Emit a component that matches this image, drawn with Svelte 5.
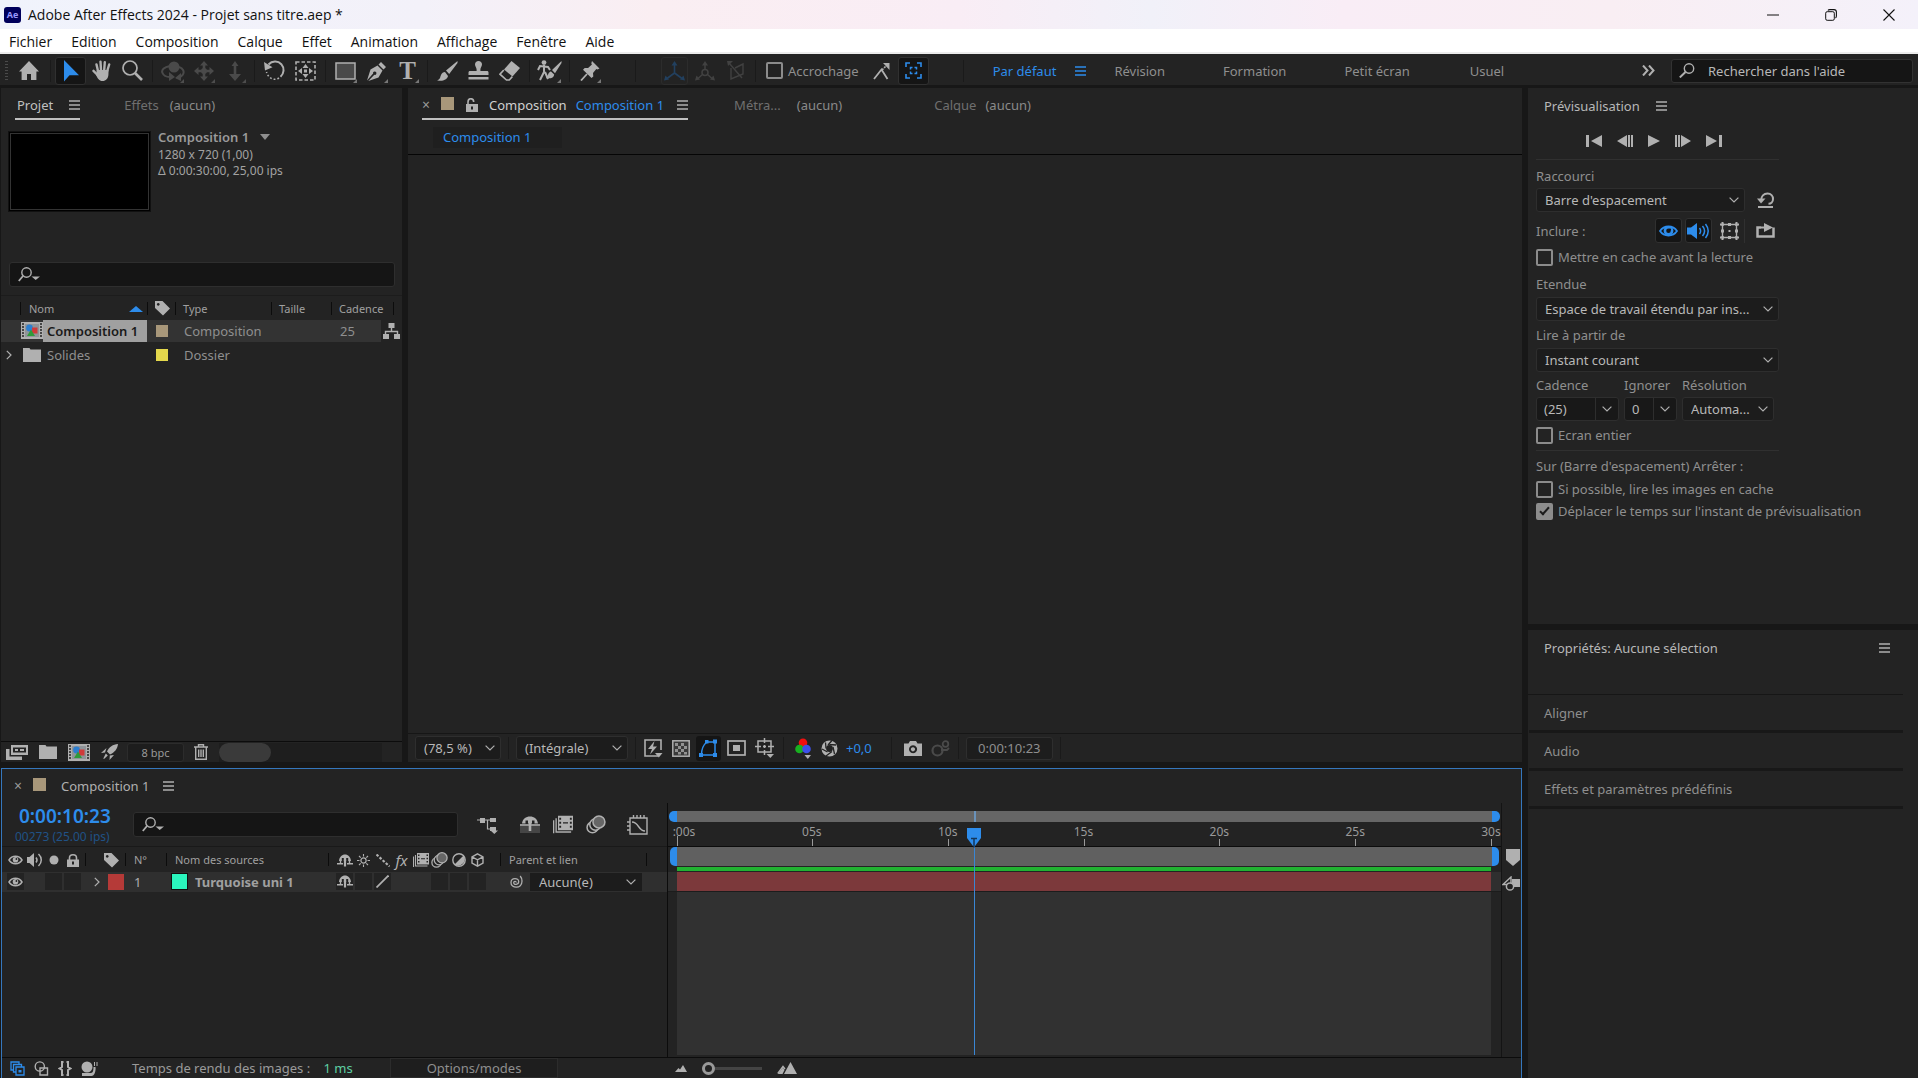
<script lang="ts">
  type Icon = { w: number; h: number; d: string };

  const line = (d: string, width = 1.5) =>
    `<path d="${d}" fill="none" stroke="currentColor" stroke-width="${width}"/>`;
  const fill = (d: string) => `<path d="${d}" fill="currentColor"/>`;

  const shapes =
    '<circle cx="8.5" cy="6" r="3.4" fill="#2d7fd0"/><rect x="11" y="5.500" width="5.500" height="6" fill="#d03a3a"/><path d="M6 14l4-6.500L14 14z" fill="#2f9a3a"/>';
  const film =
    '<rect width="22" height="17" fill="#b0b0b0"/><rect x="4" y="2" width="14" height="13" fill="#8f9499"/><path d="M1 2h2M1 5h2M1 8h2M1 11h2M1 14h2M19 2h2M19 5h2M19 8h2M19 11h2M19 14h2" stroke="#232323" stroke-width="1.6"/>';

  const icons: Record<string, Icon> = {
    home: { w: 20, h: 19, d: fill('M10 0l10 10.5h-2.6V19H12v-6H8v6H2.600V10.500H0z') },
    select: { w: 16, h: 22, d: fill('M1 0v21.500l5.500-6.300H16z') },
    hand: {
      w: 20,
      h: 21,
      d:
        '<g stroke="currentColor" stroke-width="2.400" stroke-linecap="round" fill="none"><path d="M6 11L4.500 4.500M9 10L8.500 1.600M12.200 10l.6-7.800M15.200 11l2-6.500M5.500 15L1.500 10.800"/></g>' +
        fill('M4.800 10h11.800l-.2 5c-.4 3.500-2.400 6-5.800 6-3.600 0-4.800-2.400-6.600-6z')
    },
    zoom: {
      w: 21,
      h: 21,
      d: '<circle cx="8" cy="8" r="7" fill="none" stroke="currentColor" stroke-width="1.700"/>' + line('M13 13l7 7', 2.6)
    },
    orbit: {
      w: 24,
      h: 20,
      d:
        '<circle cx="13" cy="6" r="5.500" fill="currentColor"/>' +
        line('M9 5C3 6 0 9 1.500 12c1 2.500 4 4 7.500 4M18 6c4 1 6 5 3.500 8-1.500 2-4 3-6 3', 2) +
        fill('M8 11v9l6-4zM20 20v-8l-6 5z')
    },
    pan: {
      w: 20,
      h: 20,
      d:
        line('M10 3v14M3 10h14', 2.6) +
        fill('M10 0l4 4.500H6zM10 20l4-4.500H6zM0 10l4.500-4v8zM20 10l-4.500-4v8z') +
        '<circle cx="10" cy="10" r="3" fill="currentColor"/>'
    },
    dolly: { w: 14, h: 20, d: line('M7 3v14', 2.6) + fill('M7 0l3.500 5h-7zM7 20l6-7H1z') },
    rotate: {
      w: 21,
      h: 21,
      d:
        line('M4.500 4.500C8 .8 14 .6 17.300 4.200c3.400 4 2.800 9.300-.8 12.500', 2) +
        fill('M0 2l1 8.500 7.500-3.300z') +
        '<path d="M15 18c-4.500 2.800-10.500 1-12.500-6" fill="none" stroke="currentColor" stroke-width="1.600" stroke-dasharray="1.800 2"/>'
    },
    anchor: {
      w: 21,
      h: 20,
      d:
        '<rect x="1" y="1" width="19" height="18" fill="none" stroke="currentColor" stroke-width="1.600" stroke-dasharray="3.500 2"/>' +
        fill('M10.500 3l3 4h-6zM10.500 17l3-4h-6zM3 10l4-3v6zM18 10l-4-3v6z') +
        '<rect x="9" y="8.500" width="3" height="3" fill="currentColor"/>'
    },
    rect: {
      w: 21,
      h: 18,
      d: '<rect x="1" y="1" width="19" height="16" fill="#4a4a4a" stroke="currentColor" stroke-width="1.500"/>'
    },
    pen: {
      w: 20,
      h: 20,
      d:
        fill('M0 19.500L3.500 8.500l7-4 5 5-4 7L1.300 20l6-6.200a1.700 1.700 0 1 0-1.200-1.200zM11.500 3.500L14 1l5 5-2.500 2.500z')
    },
    brush: {
      w: 21,
      h: 20,
      d: fill('M20.500 0L9 9.500l3.200 3.500L20.500 2zM8 11c-4 .5-4 3.500-5 6-.6 1.300-1.600 1.900-3 2.200 4.500 1.300 10 .2 11-4.200z')
    },
    stamp: {
      w: 21,
      h: 19,
      d: fill('M7 3.500C7 1.500 8.500 0 10.500 0S14 1.500 14 3.500c0 2-1.600 3-1.600 5V10H19c1 0 1.500.7 1.500 1.600V14H.5v-2.400C.5 10.700 1 10 2 10h6.600V8.500c0-2-1.600-3-1.600-5zM.5 16h20v2.400H.5z')
    },
    eraser: {
      w: 21,
      h: 20,
      d: fill('M12.500 0L21 7l-7.500 8.500-8.500-7z') + line('M4.800 9L1 13.200 7.500 19h2.800l3-3.400', 1.6)
    },
    roto: {
      w: 25,
      h: 21,
      d:
        '<circle cx="7" cy="2.600" r="2.400" fill="currentColor"/>' +
        line('M7 5v7l-4 8M8 12l3 7M1 10l2-4 8 1 2 3', 2) +
        fill('M24.500 1L15 10l3 3.200L24.500 3zM14 11.500c-3 .5-2.500 4-5 6.500 4 1 8 0 8.200-3.500z')
    },
    pin: {
      w: 20,
      h: 20,
      d: fill('M12 0l7.500 7.500-2 1-1.200-.4-3.300 4 .3 3.400-1.800 1.600L3 8.700l1.700-1.800 3.400.2 3.800-3.500-.6-1.300z') + line('M7 13l-6 6.500', 1.8)
    },
    axis: {
      w: 21,
      h: 20,
      d: line('M10.500 3v9L3 17.500M10.500 12l7.500 5.500', 1.6) + fill('M10.500 0l3 4.500h-6zM0 19.500l1.500-5 3.500 4zM21 19.500l-1.500-5-3.500 4z')
    },
    worldAxis: {
      w: 20,
      h: 20,
      d:
        line('M10 3v6M8 13l-5 4.500M12 13l5 4.500', 1.5) +
        '<circle cx="10" cy="11.500" r="3" fill="none" stroke="currentColor" stroke-width="1.500"/>' +
        fill('M10 0l3 4.500H7zM0 19.500l1.500-5 3.500 4zM20 19.500l-1.500-5-3.500 4z')
    },
    viewAxis: { w: 18, h: 20, d: line('M4 7v11l12-5V3L8 7M2 2l13 15', 1.4) + fill('M0 0h6L1 5z') },
    snap: {
      w: 17,
      h: 18,
      d:
        line('M1 17l7.500-9.500 6 9.500', 1.8) +
        '<path d="M9 8l4-4" stroke="currentColor" stroke-width="1.600" stroke-dasharray="2 1"/>' +
        fill('M10 1h6.500v7z')
    },
    bounds: {
      w: 17,
      h: 17,
      d:
        line('M1 5V1h4M12 1h4v4M16 12v4h-4M5 16H1v-4', 1.6) +
        '<path d="M5.500 7.500v-2h2M9.500 5.500h2v2M11.500 9.500v2h-2M7.500 11.500h-2v-2" fill="none" stroke="currentColor" stroke-width="1.500"/>'
    },
    menu: { w: 11, h: 10, d: line('M0 1h11M0 5h11M0 9h11', 1.4) },
    more: { w: 13, h: 11, d: line('M1 .5l4.500 5L1 10.500M7 .5l4.500 5L7 10.500', 2) },
    search: {
      w: 16,
      h: 15,
      d: '<circle cx="10" cy="5.500" r="4.700" fill="none" stroke="currentColor" stroke-width="1.400"/>' + line('M6.500 9L.8 14.400', 2)
    },
    searchMenu: {
      w: 22,
      h: 15,
      d:
        '<circle cx="8.500" cy="5.500" r="4.700" fill="none" stroke="currentColor" stroke-width="1.400"/>' +
        line('M5 9L.8 14', 1.8) +
        fill('M13.500 9.500H22L17.700 13z')
    },
    lock: {
      w: 12,
      h: 14,
      d:
        line('M2 6.500V4c0-2 1-3.300 2.800-3.300S7.700 2 7.700 4', 1.6) +
        '<path d="M0 6h12v8H0zM5 8.500h2v3H5z" fill="currentColor" fill-rule="evenodd"/>'
    },
    padlock: {
      w: 12,
      h: 13,
      d:
        line('M2.500 6V4c0-2 1.400-3.200 3.500-3.200S9.500 2 9.500 4v2', 1.6) +
        '<path d="M0 5.500h12V13H0zM5 7.500h2v3H5z" fill="currentColor" fill-rule="evenodd"/>'
    },
    down: { w: 10, h: 6, d: fill('M0 0h10L5 6z') },
    up: { w: 14, h: 6, d: fill('M0 6h14L7 0z') },
    tag: {
      w: 15,
      h: 15,
      d: '<path d="M0 0h7.500L15 7.500 8 14.500 0 7zM3.200 2a1.400 1.400 0 1 0 .1 0z" fill="currentColor" fill-rule="evenodd"/>'
    },
    comp: { w: 22, h: 17, d: film + shapes },
    folder: { w: 18, h: 14, d: fill('M0 0h6.500l1 1.500H18V14H0z') },
    tree: { w: 17, h: 16, d: line('M8.500 4v5M2.500 12V8.500h12V12', 1.4) + fill('M5.500 0h6v5h-6zM0 11h6v5H0zM11 11h6v5h-6z') },
    right: { w: 6, h: 10, d: line('M.8.8L5 5 .8 9.200', 1.2) },
    chevron: { w: 10, h: 6, d: line('M.6.6L5 5 9.400.6', 1.2) },
    interpret: {
      w: 22,
      h: 15,
      d:
        '<path d="M5 0h17v10H5zM7 2.500v5h13v-5z" fill="currentColor" fill-rule="evenodd"/>' +
        line('M9 5h3M14 5h4', 1.8) +
        fill('M0 4h3.500v7.500H16V15H0zM1 13h1M3 13h1')
    },
    rocket: {
      w: 17,
      h: 16,
      d: fill('M17 0c-5 .3-9 3-11 7.500l3 3C13.500 8.500 16.500 5 17 0zM5.500 4L0 9l4-.5zM13 11l-4.500 5 .3-4.500zM4.800 9.500l2 2L3 15l-.7-.6z')
    },
    trash: {
      w: 14,
      h: 16,
      d: line('M0 3h14M4.500 3V.8h5V3M1.700 3v12.200h10.600V3M4.700 5.500v7.500M7 5.500v7.500M9.300 5.500v7.500', 1.4)
    },
    fast: {
      w: 19,
      h: 21,
      d:
        line('M14 18H1V2h16v10', 1.6) +
        fill('M10.500 3L4 11h4l-2 5.500 7-8H9zM11 15h7.500l-3.700 4.500z')
    },
    grid: {
      w: 18,
      h: 17,
      d:
        '<rect x=".8" y=".8" width="16.400" height="15.400" fill="#3a3a3a" stroke="currentColor" stroke-width="1.500"/>' +
        '<path d="M3 3h3v3H3zM9 3h3v3H9zM6 6h3v3H6zM12 6h3v3h-3zM3 9h3v3H3zM9 9h3v3H9zM6 12h3v2.500H6zM12 12h3v2.500h-3z" fill="currentColor" opacity=".75"/>'
    },
    mask: {
      w: 19,
      h: 18,
      d: line('M2.500 16c0-6 1.500-10 5.500-13h8v13z', 1.5) + fill('M0 14h4v4H0zM14 14h4v4h-4zM14 .5h4v4h-4zM6 1h3.500v3.500H6z')
    },
    safe: {
      w: 19,
      h: 16,
      d: '<rect x="1" y="1" width="17" height="14" fill="none" stroke="currentColor" stroke-width="1.700"/><rect x="6" y="5" width="7" height="6" fill="currentColor"/>'
    },
    ruler: { w: 20, h: 20, d: line('M3 3h13v11H3zM9.500 0v5M9.500 12v5M0 8.500h6M13 8.500h6M9.500 7v3M8 8.500h3', 1.5) + fill('M11.500 16H19l-3.700 4z') },
    rgb: {
      w: 17,
      h: 21,
      d:
        '<circle cx="8" cy="4.800" r="4.300" fill="#f01010"/><circle cx="4.500" cy="11" r="4.300" fill="#18b020"/><circle cx="11.500" cy="11" r="4.300" fill="#3c50e8"/>' +
        fill('M9.500 17H16l-3.200 4z')
    },
    aperture: {
      w: 17,
      h: 17,
      d:
        '<circle cx="8.500" cy="8.500" r="5.700" fill="none" stroke="currentColor" stroke-width="4.600"/>' +
        '<path d="M8.500 4.500L15 5M12 7l1.500 7M11 11.500L5 16M6.500 12L1 9M5 8.500L4.500 2.500M7 5l4-4.500" stroke="#232323" stroke-width="1.300"/>'
    },
    camera: {
      w: 18,
      h: 15,
      d: '<path d="M0 2.500h4.500L6 0h6l1.500 2.500H18V15H0zM9 4.300a4 4 0 1 0 .1 0zM9 6.200a2.100 2.100 0 1 1-.1 0z" fill="currentColor" fill-rule="evenodd"/>'
    },
    showSnap: {
      w: 19,
      h: 17,
      d:
        '<circle cx="6.500" cy="10.500" r="5" fill="none" stroke="currentColor" stroke-width="2.200"/><circle cx="14.500" cy="4" r="2.800" fill="none" stroke="currentColor" stroke-width="1.800"/>' +
        line('M10 10h6l2-2', 1.8)
    },
    first: { w: 16, h: 12, d: fill('M0 0h3v12H0zM16 0v12L5 6z') },
    prev: { w: 16, h: 12, d: fill('M0 6l10-6v12zM11 0h2v12h-2zM14 0h2v12h-2z') },
    play: { w: 12, h: 12, d: fill('M0 0l12 6-12 6z') },
    next: { w: 16, h: 12, d: fill('M16 6L6 0v12zM0 0h2v12H0zM3 0h2v12H3z') },
    last: { w: 16, h: 12, d: fill('M13 0h3v12h-3zM0 0l11 6-11 6z') },
    reset: { w: 17, h: 16, d: line('M4 9C4 4 7 1.500 10.500 1.500S16 4 16 7s-2 4.800-4.500 4.800M1 15h15', 2) + fill('M0 6.500h8.500L4 11.500z') },
    eyeBlue: {
      w: 19,
      h: 14,
      d: line('M1 7C5 1 14 1 18 7c-4 6-13 6-17 0z', 1.8) + '<circle cx="9.500" cy="6.800" r="3.600" fill="none" stroke="currentColor" stroke-width="2.600"/><circle cx="11" cy="5.500" r="1" fill="#111"/>'
    },
    audioBlue: { w: 23, h: 16, d: fill('M0 4.500h4L10 0v16l-6-4.500H0z') + line('M12.500 5c1.500 2 1.500 4 0 6M15.500 3c2.500 3 2.500 7 0 10M18.500 1c3.500 4.500 3.500 9.500 0 14', 1.5) },
    overlay: {
      w: 19,
      h: 18,
      d: line('M2.500 2.500h14v13h-14z', 1.4) + fill('M0 1.500h4v2H0zM15 1.500h4v2h-4zM0 14.500h4v2H0zM15 14.500h4v2h-4zM1.500 0h2v4h-2zM15.500 0h2v4h-2zM1.500 14h2v4h-2zM15.500 14h2v4h-2zM8 1h3v3H8zM8 14h3v3H8zM1 7.500h3v3H1zM15 7.500h3v3h-3zM8.500 8h2v2h-2z')
    },
    exporter: { w: 19, h: 15, d: line('M5 4.500H1.500v9h16v-9', 2.5) + line('M5 4.500h5', 2) + fill('M8 0l9 4.500L8 9z') },
    eye: {
      w: 15,
      h: 10,
      d: line('M1 5c3-5 10-5 13 0-3 5-10 5-13 0z', 1.5) + '<circle cx="7.500" cy="4.800" r="2.800" fill="currentColor"/><circle cx="8.400" cy="4" r=".9" fill="#232323"/>'
    },
    audio: { w: 16, h: 14, d: fill('M0 4h2.500L7 0v14L2.500 10H0z') + line('M9 4.500c1.300 1.600 1.300 3.400 0 5M11.500 1c3.700 3.500 3.700 8.500 0 12', 1.5) },
    solo: { w: 10, h: 10, d: '<circle cx="5" cy="5" r="4.500" fill="currentColor"/>' },
    shy: {
      w: 16,
      h: 13,
      d:
        '<path d="M2 7C2.300 3 5 .5 8 .5S13.700 3 14 7zM4.800 4h2v3h-2zM9.200 4h2v3h-2z" fill="currentColor" fill-rule="evenodd"/>' +
        line('M0 9.800h6M10 9.800h6M3.500 6.500v3M12.500 6.500v3', 1.4) +
        line('M8 6v6.500', 2.2)
    },
    shyBig: {
      w: 20,
      h: 17,
      d:
        '<path d="M0 10h20v7H0z" fill="#454545"/>' +
        '<path d="M2 7.500C2.500 3 6 .5 10 .5s7.500 2.500 8 7zM5.500 4.500H8v3H5.500zM12 4.500h2.500v3H12z" fill="currentColor" fill-rule="evenodd"/>' +
        line('M0 9h20', 1.6) +
        line('M10 7v8', 2.6)
    },
    sun: {
      w: 13,
      h: 13,
      d: '<circle cx="6.500" cy="6.500" r="2.600" fill="none" stroke="currentColor" stroke-width="1.200"/>' + line('M6.500 0v2.500M6.500 10.500V13M0 6.500h2.500M10.500 6.500H13M2 2l1.700 1.700M9.300 9.300L11 11M11 2L9.300 3.700M3.700 9.300L2 11', 1.1)
    },
    quality: { w: 14, h: 13, d: '<path d="M.5.500l13 12" stroke="currentColor" stroke-width="2.200" stroke-dasharray="2.600 1.600"/>' },
    frames: {
      w: 16,
      h: 14,
      d:
        '<path d="M4 0h12v11.500H4zM5 1.500v1.600h1.500V1.500zM5 4.700v1.600h1.500V4.700zM5 8v1.600h1.500V8zM13.500 1.500v1.600H15V1.500zM13.500 4.700v1.600H15V4.700zM13.500 8v1.600H15V8zM8 5.200h4v1H8z" fill="currentColor" fill-rule="evenodd"/>' +
        line('M2.500 2v11h12M.5 3.500V14', 1.1)
    },
    blur: {
      w: 17,
      h: 16,
      d:
        '<circle cx="5.500" cy="10.500" r="4.600" fill="#232323" stroke="currentColor" stroke-width="1.300"/><circle cx="8" cy="8" r="4.800" fill="#232323" stroke="currentColor" stroke-width="1.300"/><circle cx="11" cy="5.800" r="5.100" fill="#666" stroke="currentColor" stroke-width="1.300"/>'
    },
    adjust: { w: 14, h: 14, d: '<circle cx="7" cy="7" r="6.200" fill="none" stroke="currentColor" stroke-width="1.400"/>' + fill('M11.500 2.500a6.500 6.500 0 0 1-9 9z') },
    cube: { w: 13, h: 14, d: line('M6.500.8l5.500 3v6.400l-5.500 3-5.500-3V3.800zM1 3.800l5.500 3 5.500-3M6.500 6.800v6.400', 1.4) },
    slash: { w: 13, h: 13, d: line('M.5 12.500l12-12', 1.8) },
    whip: { w: 15, h: 14, d: line('M8 7.500c.5-1.500-2.300-1.500-2.300.3 0 2.300 5 2.400 5-1.200 0-4-7.500-4.400-7.700.8C2.700 13.500 14 14.500 14 6c0-2.200-.7-3.700-1.800-5', 1.3) },
    flow: { w: 22, h: 18, d: fill('M3 2h5v5H3zM13 2h6v4h-6zM13 11h6v4h-6zM13.500 14.500H21L17.300 18z') + line('M0 4h14M10.500 4v9h3', 1.2) },
    graph: { w: 21, h: 20, d: line('M3 3h17v16H3zM6.500 0v3M10 0v3M13.500 0v3M17 0v3M0 7h3M0 11h3M0 15h3M5 7c7 0 6 9 13 9', 1.4) },
    shield: { w: 14, h: 17, d: fill('M0 0h14v11l-7 6-7-6z') },
    keyer: { w: 18, h: 15, d: fill('M10 3h8v8h-8z') + line('M1 8.500L9 1v7.500z', 1.4) + '<circle cx="8" cy="10.500" r="3.600" fill="#232323" stroke="currentColor" stroke-width="1.500"/>' },
    layersPane: { w: 15, h: 15, d: line('M4 9H1V1h8v2M6.500 11H3.500V3.500h8v2.500M6 6h8v8H6z', 1.3) + fill('M8.500 9h3v2.500h-3z') },
    switches: { w: 15, h: 15, d: '<circle cx="5.800" cy="5.500" r="4.600" fill="none" stroke="currentColor" stroke-width="1.400"/>' + line('M6 7h7.500v7H6z', 1.4) },
    braces: { w: 14, h: 15, d: line('M5.500 1H4v5L1.500 7.500 4 9v5h1.500M8.500 1H10v5l2.500 1.500L10 9v5H8.500', 2) },
    snail: { w: 17, h: 15, d: '<circle cx="6" cy="6" r="5.500" fill="currentColor"/>' + fill('M1 12h9c2 0 2.500-3 2.500-6h2c.5 4-1 9-4 9H1z') + line('M13.500 5V1M16 5V1', 1) },
    hillSmall: { w: 12, h: 7, d: fill('M0 7l3.500-4L5 4.500 8 0l4 7z') },
    hillBig: { w: 20, h: 12, d: fill('M7 12l6.500-12L20 12z') + line('M.8 11.500L6 4.500l2 2.500', 1.4) + fill('M1 12l5-6.500L7.500 8 5.500 12z') },
    min: { w: 12, h: 12, d: line('M0 6h12', 1) },
    max: { w: 12, h: 12, d: '<rect x=".7" y="2.700" width="8.600" height="8.600" rx="1.500" fill="none" stroke="currentColor"/>' + line('M3 1.500C3.300.8 4 .6 5 .6h4c1.600 0 2.400.8 2.400 2.400v4c0 1-.3 1.700-1 2', 1.1) },
    close: { w: 12, h: 12, d: line('M.5.500l11 11M11.500.500L.5 11.500', 1.1) }
  };

  const menus = ['Fichier', 'Edition', 'Composition', 'Calque', 'Effet', 'Animation', 'Affichage', 'Fenêtre', 'Aide'];

  const toolGroups = [
    [
      { icon: 'select', label: 'Sélection', active: true },
      { icon: 'hand', label: 'Main' },
      { icon: 'zoom', label: 'Zoom' }
    ],
    [
      { icon: 'orbit', label: 'Orbite', dim: true, sub: true },
      { icon: 'pan', label: 'Panoramique', dim: true, sub: true },
      { icon: 'dolly', label: 'Travelling', dim: true, sub: true }
    ],
    [
      { icon: 'rotate', label: 'Rotation' },
      { icon: 'anchor', label: "Point d'ancrage" }
    ],
    [
      { icon: 'rect', label: 'Rectangle', sub: true },
      { icon: 'pen', label: 'Plume', sub: true },
      { icon: '', label: 'Texte', sub: true }
    ],
    [
      { icon: 'brush', label: 'Pinceau' },
      { icon: 'stamp', label: 'Tampon' },
      { icon: 'eraser', label: 'Gomme' }
    ],
    [{ icon: 'roto', label: 'Roto-pinceau', sub: true }],
    [{ icon: 'pin', label: 'Marionnette', sub: true }]
  ];

  const transport = [
    ['first', 'Première image'],
    ['prev', 'Image précédente'],
    ['play', 'Lecture'],
    ['next', 'Image suivante'],
    ['last', 'Dernière image']
  ];

  const closedPanels = ['Aligner', 'Audio', 'Effets et paramètres prédéfinis'];

  const duration = 30;
  const currentTime = 10 + 23 / 25;
  const ticks = [0, 5, 10, 15, 20, 25, 30];
  const playhead = (currentTime / duration) * 100;

  let accrochage = $state(false);
  let cacheAvant = $state(false);
  let ecranEntier = $state(false);
  let lireCache = $state(false);
  let deplacer = $state(true);
  let cadence = $state('(25)');
  let ignorer = $state('0');
  let zoomLevel = $state(0);
</script>

{#snippet icon(name: string)}
  <svg class="icon" width={icons[name].w} height={icons[name].h} viewBox="0 0 {icons[name].w} {icons[name].h}" aria-hidden="true">
    {@html icons[name].d}
  </svg>
{/snippet}

{#snippet dropdown(label: string, value: string, cls: string)}
  <span class="select {cls}">
    <select aria-label={label}><option>{value}</option></select>
    {@render icon('chevron')}
  </span>
{/snippet}

<div class="app">
  <header class="titlebar">
    <span class="logo">Ae</span>
    <h1>Adobe After Effects 2024 - Projet sans titre.aep *</h1>
    <div class="window-buttons">
      <button aria-label="Réduire">{@render icon('min')}</button>
      <button aria-label="Restaurer">{@render icon('max')}</button>
      <button aria-label="Fermer">{@render icon('close')}</button>
    </div>
  </header>

  <nav class="menubar">
    {#each menus as menu}
      <button>{menu}</button>
    {/each}
  </nav>

  <div class="toolbar">
    <span class="grip"></span>
    <button class="home" aria-label="Accueil">{@render icon('home')}</button>
    {#each toolGroups as group}
      <span class="sep"></span>
      {#each group as tool}
        <button class="tool" class:active={tool.active} class:dim={tool.dim} class:sub={tool.sub} aria-label={tool.label}>
          {#if tool.icon}{@render icon(tool.icon)}{:else}<span class="type-tool">T</span>{/if}
        </button>
      {/each}
    {/each}
    <span class="sep wide"></span>
    <button class="tool axis pressed" aria-label="Axe local">{@render icon('axis')}</button>
    <button class="tool axis" aria-label="Axe global">{@render icon('worldAxis')}</button>
    <button class="tool axis" aria-label="Axe de vue">{@render icon('viewAxis')}</button>
    <span class="sep"></span>
    <label class="check snapping"><input type="checkbox" bind:checked={accrochage} />Accrochage</label>
    <button class="tool" aria-label="Arêtes">{@render icon('snap')}</button>
    <button class="tool active" aria-label="Limites">{@render icon('bounds')}</button>
    <span class="sep end"></span>
    <div class="workspaces">
      <button class="blue">Par défaut</button>
      <button class="blue ws-menu" aria-label="Menu">{@render icon('menu')}</button>
      <button class="revision">Révision</button>
      <button class="formation">Formation</button>
      <button class="petit">Petit écran</button>
      <button>Usuel</button>
    </div>
    <button class="more" aria-label="Plus">{@render icon('more')}</button>
    <label class="help-search">
      {@render icon('search')}
      <input type="text" placeholder="Rechercher dans l'aide" aria-label="Rechercher dans l'aide" />
    </label>
  </div>

  <div class="workspace">
    <div class="left">
      <div class="upper">
        <section class="panel project">
          <div class="tabs">
            <button class="tab current">Projet {@render icon('menu')}</button>
            <button class="tab effects">Effets <span>(aucun)</span></button>
          </div>
          <div class="info">
            <div class="thumb"></div>
            <div class="info-text">
              <strong>Composition 1 {@render icon('down')}</strong>
              <p>1280 x 720 (1,00)</p>
              <p>Δ 0:00:30:00, 25,00 ips</p>
            </div>
          </div>
          <label class="search project-search">
            {@render icon('searchMenu')}
            <input type="text" aria-label="Rechercher dans le projet" />
          </label>
          <table class="items">
            <colgroup>
              <col class="c-arrow" /><col class="c-name" /><col class="c-label" /><col class="c-type" /><col class="c-size" /><col class="c-rate" /><col />
            </colgroup>
            <thead>
              <tr>
                <th></th>
                <th><div class="name-head">Nom <span class="blue">{@render icon('up')}</span></div></th>
                <th class="center">{@render icon('tag')}</th>
                <th>Type</th>
                <th>Taille</th>
                <th>Cadence</th>
                <th class="last"></th>
              </tr>
            </thead>
            <tbody>
              <tr class="selected">
                <td></td>
                <td><div class="name">{@render icon('comp')}<b>Composition 1</b></div></td>
                <td class="center"><i class="swatch sand"></i></td>
                <td>Composition</td>
                <td></td>
                <td>25</td>
                <td class="tree">{@render icon('tree')}</td>
              </tr>
              <tr>
                <td class="arrow">{@render icon('right')}</td>
                <td><div class="name folder">{@render icon('folder')}<span>Solides</span></div></td>
                <td class="center"><i class="swatch yellow"></i></td>
                <td>Dossier</td>
                <td></td>
                <td></td>
                <td></td>
              </tr>
            </tbody>
          </table>
          <footer class="project-footer">
            <button aria-label="Interpréter">{@render icon('interpret')}</button>
            <button aria-label="Nouveau dossier">{@render icon('folder')}</button>
            <button aria-label="Nouvelle composition">{@render icon('comp')}</button>
            <button aria-label="Réglages">{@render icon('rocket')}</button>
            <button class="bpc">8 bpc</button>
            <button aria-label="Supprimer">{@render icon('trash')}</button>
            <span class="scroll"><i></i></span>
          </footer>
        </section>

        <section class="panel viewer">
          <div class="tabs">
            <div class="tab current comp-tab">
              <button class="x" aria-label="Fermer l'onglet">×</button>
              <i class="swatch big"></i>
              {@render icon('lock')}
              <span>Composition</span>
              <a href="#comp" class="blue">Composition 1</a>
              {@render icon('menu')}
            </div>
            <button class="tab footage">Métra... <span>(aucun)</span></button>
            <button class="tab layer-tab">Calque <span>(aucun)</span></button>
          </div>
          <div class="crumbs"><a href="#comp" class="blue">Composition 1</a></div>
          <div class="canvas"></div>
          <footer class="viewer-footer">
            {@render dropdown('Agrandissement', '(78,5 %)', 'mag')}
            <span class="sep"></span>
            {@render dropdown('Résolution', '(Intégrale)', 'res')}
            <span class="sep"></span>
            <button aria-label="Aperçu rapide">{@render icon('fast')}</button>
            <button aria-label="Transparence">{@render icon('grid')}</button>
            <button class="active" aria-label="Masques">{@render icon('mask')}</button>
            <button aria-label="Zone d'intérêt">{@render icon('safe')}</button>
            <button aria-label="Grilles">{@render icon('ruler')}</button>
            <span class="sep"></span>
            <button class="exposure" aria-label="Couches">{@render icon('rgb')}</button>
            <button aria-label="Exposition">{@render icon('aperture')}</button>
            <a href="#exposure" class="blue">+0,0</a>
            <span class="sep spaced"></span>
            <button aria-label="Instantané">{@render icon('camera')}</button>
            <button class="dim" aria-label="Afficher l'instantané">{@render icon('showSnap')}</button>
            <span class="sep"></span>
            <button class="timebox">0:00:10:23</button>
            <span class="sep"></span>
          </footer>
        </section>
      </div>

      <section class="timeline">
        <div class="tl-tabs">
          <button class="x" aria-label="Fermer l'onglet">×</button>
          <i class="swatch big"></i>
          <span>Composition 1</span>
          {@render icon('menu')}
        </div>
        <div class="tl-body">
          <div class="layers">
            <div class="tl-controls">
              <div class="timecode">
                <strong>0:00:10:23</strong>
                <span>00273 (25.00 ips)</span>
              </div>
              <label class="search tl-search">
                {@render icon('searchMenu')}
                <input type="text" aria-label="Rechercher un calque" />
              </label>
              <div class="tl-buttons">
                <button aria-label="Graphique de composition">{@render icon('flow')}</button>
                <button class="shy-all" aria-label="Masquer les calques">{@render icon('shyBig')}</button>
                <button class="zoomed" aria-label="Fusion d'images">{@render icon('frames')}</button>
                <button class="zoomed" aria-label="Flou de mouvement">{@render icon('blur')}</button>
                <button class="graph" aria-label="Éditeur de graphique">{@render icon('graph')}</button>
              </div>
            </div>
            <table class="layer-table">
              <colgroup>
                <col class="l-av" /><col class="l-label" /><col class="l-num" /><col class="l-name" /><col class="l-switch" /><col class="l-parent" /><col />
              </colgroup>
              <thead>
                <tr>
                  <th>
                    <div class="slots">
                      {#each ['eye', 'audio', 'solo', 'padlock'] as name}<span>{@render icon(name)}</span>{/each}
                    </div>
                  </th>
                  <th><div class="label-head">{@render icon('tag')}</div></th>
                  <th>N°</th>
                  <th>Nom des sources</th>
                  <th>
                    <div class="slots">
                      <span>{@render icon('shy')}</span>
                      <span>{@render icon('sun')}</span>
                      <span>{@render icon('quality')}</span>
                      <span class="fx">fx</span>
                      <span>{@render icon('frames')}</span>
                      <span>{@render icon('blur')}</span>
                      <span>{@render icon('adjust')}</span>
                      <span>{@render icon('cube')}</span>
                    </div>
                  </th>
                  <th>Parent et lien</th>
                  <th></th>
                </tr>
              </thead>
              <tbody>
                <tr>
                  <td>
                    <div class="slots">
                      <span class="cell">{@render icon('eye')}</span><span></span><span class="cell"></span><span class="cell"></span>
                    </div>
                  </td>
                  <td><div class="label-cell">{@render icon('right')}<i class="swatch red"></i></div></td>
                  <td class="num">1</td>
                  <td><div class="layer-name"><i class="swatch turquoise"></i><b>Turquoise uni 1</b></div></td>
                  <td>
                    <div class="slots">
                      <span class="cell">{@render icon('shy')}</span>
                      <span class="cell"></span>
                      <span class="cell">{@render icon('slash')}</span>
                      <span></span>
                      <span></span>
                      <span class="cell"></span>
                      <span class="cell"></span>
                      <span class="cell"></span>
                    </div>
                  </td>
                  <td><div class="parent">{@render icon('whip')}{@render dropdown('Parent et lien', 'Aucun(e)', 'parent-select')}</div></td>
                  <td></td>
                </tr>
              </tbody>
            </table>
          </div>

          <div class="time">
            <div class="navigator"><i class="nav-mark" style="left: {playhead}%"></i></div>
            <div class="ruler">
              {#each ticks as t}
                <span class="tick" style="left: {(t / duration) * 100}%">{t === 0 ? ':00s' : String(t).padStart(2, '0') + 's'}</span>
              {/each}
            </div>
            <div class="workarea"></div>
            <div class="cached"></div>
            <div class="track"><i></i></div>
            <div class="empty"></div>
            <div class="playhead-rail">
              <div class="playhead" style="left: {playhead}%">
                <svg width="14" height="20" viewBox="0 0 14 20" aria-hidden="true">
                  <path d="M0 0h14v10L8 18H6L0 10z" fill="#2d8ceb" />
                  <path d="M4 10.500h6M7 10.500v9" stroke="#14365a" stroke-width="1.500" />
                </svg>
              </div>
            </div>
          </div>
          <div class="markers">
            {@render icon('shield')}
            {@render icon('keyer')}
          </div>
        </div>
        <footer class="tl-footer">
          <div class="panes">
            <button class="blue" aria-label="Options de calque">{@render icon('layersPane')}</button>
            <button aria-label="Modes de transfert">{@render icon('switches')}</button>
            <button aria-label="Entrée et sortie">{@render icon('braces')}</button>
            <button aria-label="Temps de rendu">{@render icon('snail')}</button>
          </div>
          <span class="render">Temps de rendu des images : <em>1 ms</em></span>
          <button class="modes">Options/modes</button>
          <div class="scale">
            {@render icon('hillSmall')}
            <input type="range" min="0" max="100" bind:value={zoomLevel} aria-label="Échelle de temps" />
            {@render icon('hillBig')}
          </div>
        </footer>
      </section>
    </div>

    <aside class="right">
      <section class="panel preview">
        <h2>Prévisualisation {@render icon('menu')}</h2>
        <div class="form">
          <div class="transport">
            {#each transport as [name, label]}
              <button aria-label={label}>{@render icon(name)}</button>
            {/each}
          </div>
          <p class="caption first">Raccourci</p>
          <div class="line">
            {@render dropdown('Raccourci', "Barre d'espacement", 'shortcut')}
            <button aria-label="Réinitialiser">{@render icon('reset')}</button>
          </div>
          <div class="line include">
            <span>Inclure :</span>
            <button class="toggle" aria-label="Vidéo">{@render icon('eyeBlue')}</button>
            <button class="toggle" aria-label="Audio">{@render icon('audioBlue')}</button>
            <button class="overlays" aria-label="Incrustations">{@render icon('overlay')}</button>
            <button class="export" aria-label="Boucle">{@render icon('exporter')}</button>
          </div>
          <label class="check"><input type="checkbox" bind:checked={cacheAvant} />Mettre en cache avant la lecture</label>
          <p class="caption">Etendue</p>
          {@render dropdown('Etendue', 'Espace de travail étendu par ins...', 'full')}
          <p class="caption tight">Lire à partir de</p>
          {@render dropdown('Lire à partir de', 'Instant courant', 'full')}
          <div class="triple">
            <label for="cadence">Cadence</label>
            <label for="ignorer">Ignorer</label>
            <span>Résolution</span>
            <div class="combo">
              <input id="cadence" type="text" bind:value={cadence} />
              <button aria-label="Choisir la cadence">{@render icon('chevron')}</button>
            </div>
            <div class="combo">
              <input id="ignorer" type="text" bind:value={ignorer} />
              <button aria-label="Choisir les images ignorées">{@render icon('chevron')}</button>
            </div>
            {@render dropdown('Résolution', 'Automa...', 'auto')}
          </div>
          <label class="check"><input type="checkbox" bind:checked={ecranEntier} />Ecran entier</label>
          <p class="caption stop">Sur (Barre d'espacement) Arrêter :</p>
          <label class="check"><input type="checkbox" bind:checked={lireCache} />Si possible, lire les images en cache</label>
          <label class="check"><input type="checkbox" bind:checked={deplacer} />Déplacer le temps sur l'instant de prévisualisation</label>
        </div>
      </section>
      <section class="panel properties">
        <h2>Propriétés: Aucune sélection {@render icon('menu')}</h2>
        {#each closedPanels as name}
          <button class="closed">{name}</button>
        {/each}
      </section>
    </aside>
  </div>
</div>

<style>
  :global(body) {
    margin: 0;
    background: #171717;
  }

  .app {
    display: flex;
    flex-direction: column;
    height: 100vh;
    overflow: hidden;
    background: #171717;
    color: #8f8f8f;
    font: 13px/16px 'Noto Sans', 'Open Sans', sans-serif;
  }

  .app *,
  .app *::before,
  .app *::after {
    box-sizing: border-box;
  }

  button,
  input,
  select {
    font: inherit;
    color: inherit;
    background: none;
    border: 0;
    padding: 0;
    margin: 0;
    outline: none;
  }

  button {
    display: flex;
    align-items: center;
    justify-content: center;
    white-space: nowrap;
  }

  p,
  h1,
  h2 {
    margin: 0;
    font: inherit;
  }

  a {
    text-decoration: none;
  }

  .icon {
    display: block;
    flex: none;
    color: #b0b0b0;
  }

  .blue,
  .blue .icon,
  .active .icon {
    color: #2d8ceb;
  }

  .dim .icon {
    color: #4a4a4a;
  }

  .center .icon,
  .center .swatch {
    margin: 0 auto;
  }

  .swatch {
    display: block;
    flex: none;
    width: 12px;
    height: 12px;
  }

  .sand {
    background: #a8977a;
  }

  .yellow {
    background: #e4d84c;
  }

  .swatch.big {
    width: 13px;
    height: 13px;
    margin-bottom: 4px;
    background: #a8977a;
  }

  .sep {
    flex: none;
    width: 1px;
    height: 22px;
    background: #1a1a1a;
  }

  .x {
    font-size: 14px;
    color: #9a9a9a;
  }

  /* title and menus */
  .titlebar {
    flex: none;
    display: flex;
    align-items: center;
    height: 29px;
    padding-left: 4px;
    background: linear-gradient(90deg, #f0f3fc 0%, #f3f1f9 22%, #faeef2 34%, #f9edf5 50%, #f1f1f9 60%, #f9edf6 70%, #f9eef3 84%, #f4f1fa 100%);
    color: #111;
  }

  .logo {
    width: 17px;
    height: 16px;
    border-radius: 3px;
    background: #00005b;
    color: #9999ff;
    font: bold 9px/16px 'Open Sans', sans-serif;
    text-align: center;
  }

  h1 {
    flex: 1;
    margin-left: 7px;
    font: 14px/20px 'Open Sans', sans-serif;
  }

  .window-buttons {
    display: flex;
  }

  .window-buttons button {
    width: 58px;
    height: 29px;
  }

  .window-buttons .icon {
    color: #111;
  }

  .menubar {
    flex: none;
    display: flex;
    gap: 19px;
    height: 25px;
    padding: 2px 9px 0;
    background: #fff;
    border-bottom: 2px solid #ececec;
    color: #111;
    font: 14px/20px 'Open Sans', sans-serif;
  }

  /* toolbar */
  .toolbar {
    flex: none;
    display: flex;
    align-items: center;
    height: 34px;
    padding: 2px 5px 0;
    background: #232323;
    border-bottom: 3px solid #171717;
    white-space: nowrap;
  }

  .grip {
    width: 3px;
    height: 20px;
    background: repeating-linear-gradient(#4a4a4a 0 1px, transparent 1px 3px);
  }

  .home {
    width: 42px;
    margin-right: -4px;
  }

  .toolbar .sep {
    margin: 0 4px;
  }

  .tool {
    flex: none;
    position: relative;
    width: 31px;
    height: 28px;
    border-radius: 3px;
  }

  .tool.active {
    background: #151515;
    border: 1px solid #303030;
  }

  .tool.sub::after {
    content: '';
    position: absolute;
    right: 4px;
    bottom: 2px;
    border: 2px solid #777;
    border-top-color: transparent;
    border-left-color: transparent;
  }

  .tool.dim::after {
    opacity: 0.5;
  }

  .type-tool {
    font: bold 25px/28px 'Liberation Serif', serif;
    color: #b0b0b0;
  }

  .toolbar .sep.wide {
    margin: 0 25px 0 30px;
  }

  .tool.axis .icon {
    color: #414141;
  }

  .tool.axis.pressed {
    width: 27px;
    margin-right: 1px;
    border: 1px solid #2c2c2c;
  }

  .tool.axis.pressed .icon {
    color: #22405f;
  }

  .check {
    display: flex;
    align-items: center;
    gap: 5px;
    white-space: nowrap;
  }

  .check input {
    appearance: none;
    flex: none;
    position: relative;
    width: 17px;
    height: 17px;
    border: 2px solid #8c8c8c;
    border-radius: 2px;
  }

  .check input:checked {
    background: #8c8c8c;
  }

  .check input:checked::before {
    content: '';
    position: absolute;
    left: 4px;
    top: 0;
    width: 5px;
    height: 10px;
    border: solid #1c1c1c;
    border-width: 0 2px 2px 0;
    transform: rotate(42deg);
  }

  .snapping {
    margin-right: 7px;
    margin-left: 6px;
  }

  .snapping + .tool {
    margin-right: 1px;
  }

  .toolbar .sep.end {
    margin: 0 29px 0 34px;
  }

  .workspaces {
    display: flex;
    flex: 1;
  }

  .ws-menu {
    margin: 0 28px 0 19px;
  }

  .revision,
  .formation {
    margin-right: 58px;
  }

  .petit {
    margin-right: 60px;
  }

  .more {
    padding: 0 16px;
  }

  .help-search {
    display: flex;
    align-items: center;
    width: 242px;
    height: 24px;
    padding-left: 7px;
    gap: 13px;
    background: #151515;
    border: 1px solid #323232;
    border-radius: 3px;
    color: #b8b8b8;
  }

  .help-search input {
    flex: 1;
    min-width: 0;
  }

  .help-search input::placeholder {
    color: #b8b8b8;
  }

  /* panels */
  .workspace {
    flex: 1;
    display: flex;
    gap: 6px;
    min-height: 0;
    padding-left: 1px;
  }

  .left {
    flex: 1;
    display: flex;
    flex-direction: column;
    gap: 6px;
    min-width: 0;
  }

  .upper {
    flex: 674;
    display: flex;
    gap: 6px;
    min-height: 0;
  }

  .panel {
    display: flex;
    flex-direction: column;
    background: #232323;
    min-height: 0;
  }

  .project {
    width: 401px;
  }

  .viewer {
    flex: 1;
    min-width: 0;
  }

  .tabs {
    display: flex;
    height: 36px;
    padding: 0 14px;
  }

  .tab {
    display: flex;
    align-items: center;
    height: 32px;
    padding-top: 4px;
    border-bottom: 2px solid transparent;
    color: #6f6f6f;
  }

  .tab.current {
    gap: 16px;
    padding-left: 2px;
    border-bottom-color: #c0c0c0;
    color: #c0c0c0;
  }

  .tab span {
    color: #8a8a8a;
  }

  .effects {
    gap: 11px;
    margin-left: 44px;
  }

  .info {
    display: flex;
    gap: 7px;
    height: 138px;
    padding: 7px 7px 0;
  }

  .thumb {
    width: 143px;
    height: 81px;
    background: #000;
    border: 1px solid #111;
    outline: 1px solid #333;
    outline-offset: -3px;
  }

  .info-text strong {
    display: flex;
    align-items: center;
    gap: 11px;
    height: 12px;
    margin-bottom: 4px;
    font-weight: 600;
    color: #9a9a9a;
  }

  .info-text .icon {
    color: #8f8f8f;
  }

  .info-text p {
    font-size: 12px;
    line-height: 16px;
    color: #a2a2a2;
  }

  .search {
    display: flex;
    align-items: center;
    height: 25px;
    padding-left: 8px;
    background: #151515;
    border: 1px solid #2e2e2e;
    border-radius: 3px;
  }

  .search input {
    flex: 1;
    min-width: 0;
  }

  .project-search {
    flex: none;
    margin: 0 7px 8px 8px;
  }

  table {
    width: 100%;
    table-layout: fixed;
    border-collapse: collapse;
  }

  th {
    position: relative;
    padding: 0 0 0 7px;
    font-size: 11px;
    font-weight: normal;
    text-align: left;
    color: #a0a0a0;
    white-space: nowrap;
  }

  th:not(:last-child)::after {
    content: '';
    position: absolute;
    right: 0;
    top: 6px;
    width: 1px;
    height: 13px;
    background: #0c0c0c;
  }

  td {
    padding: 0 0 0 8px;
    white-space: nowrap;
  }

  .items {
    border-top: 1px solid #1c1c1c;
  }

  .items thead tr {
    height: 24px;
  }

  .items tbody tr {
    height: 24px;
  }

  .items th:nth-child(6)::after {
    right: -13px;
  }

  .items th {
    padding-top: 2px;
  }

  .items th:nth-child(2) {
    padding-left: 8px;
  }

  .items th.center,
  .items td.center {
    padding-left: 0;
  }

  .selected td:not(.tree) {
    background: linear-gradient(#333 0 22px, transparent 22px);
  }

  .items td {
    padding-bottom: 2px;
  }

  .items .arrow {
    padding-left: 5px;
  }

  .c-arrow {
    width: 20px;
  }

  .c-name {
    width: 127px;
  }

  .c-label {
    width: 28px;
  }

  .c-type {
    width: 96px;
  }

  .c-size {
    width: 60px;
  }

  .c-rate {
    width: 49px;
  }

  .name-head {
    display: flex;
    align-items: center;
    justify-content: space-between;
    padding-right: 5px;
  }

  .items td:nth-child(2) {
    padding-left: 0;
  }

  .name {
    display: flex;
    align-items: center;
    padding-right: 1px;
  }

  .name b {
    flex: 1;
    height: 22px;
    padding-left: 4px;
    background: #a0a0a0;
    color: #1a1a1a;
    font-weight: 600;
    line-height: 22px;
  }

  .name.folder {
    gap: 6px;
    padding-left: 2px;
  }

  .items .tree {
    padding-left: 2px;
  }

  .project-footer,
  .viewer-footer {
    flex: none;
    display: flex;
    align-items: center;
    margin-top: auto;
  }

  .project-footer {
    height: 21px;
    padding-left: 5px;
    gap: 11px;
    border-top: 1px solid #0c0c0c;
  }

  .bpc {
    width: 57px;
    height: 19px;
    margin: 0 -1px 0 -2px;
    padding-top: 2px;
    background: #1d1d1d;
    border: 1px solid #2c2c2c;
    border-radius: 3px;
    font-size: 11px;
    color: #999;
  }

  .scroll {
    flex: 1;
    margin-right: 20px;
    background: #1e1e1e;
  }

  .scroll i {
    display: block;
    width: 52px;
    height: 19px;
    border-radius: 10px;
    background: #3a3a3a;
  }

  /* composition viewer */
  .tab.comp-tab {
    gap: 11px;
    padding-left: 0;
  }

  .comp-tab .swatch {
    margin-right: 1px;
  }

  .comp-tab span {
    color: #d0d0d0;
  }

  .comp-tab a {
    margin-right: 2px;
    margin-left: -2px;
  }

  .footage {
    gap: 16px;
    margin-left: 46px;
  }

  .layer-tab {
    gap: 9px;
    margin-left: 92px;
  }

  .crumbs {
    height: 31px;
    padding: 3px 0 0 25px;
    border-bottom: 1px solid #050505;
  }

  .crumbs a {
    display: block;
    width: 129px;
    height: 21px;
    padding-left: 10px;
    background: #1f1f1f;
    line-height: 20px;
  }

  .canvas {
    flex: 1;
    background: #232323;
  }

  .viewer-footer {
    height: 29px;
    padding-left: 7px;
    gap: 7px;
    border-top: 1px solid #161616;
  }

  .viewer-footer button {
    margin: 0 1px;
  }

  .viewer-footer .active {
    height: 25px;
    padding: 0 3px;
    margin: 0 -2px;
    background: #151515;
    border-radius: 3px;
  }

  .viewer-footer .exposure {
    margin-left: 4px;
  }

  .viewer-footer .timebox {
    margin: 0;
  }

  .spaced {
    margin: 0 4px 0 12px;
  }

  .timebox {
    width: 87px;
    height: 23px;
    background: #1d1d1d;
    border: 1px solid #2e2e2e;
    border-radius: 3px;
  }

  .select {
    position: relative;
    display: block;
  }

  .select select {
    appearance: none;
    display: block;
    width: 100%;
    height: 24px;
    padding: 0 20px 0 8px;
    background: #1c1c1c;
    border: 1px solid #2e2e2e;
    border-radius: 3px;
    color: #b8b8b8;
  }

  .select .icon {
    position: absolute;
    right: 6px;
    top: 9px;
    pointer-events: none;
  }

  .mag {
    width: 86px;
  }

  .res {
    width: 112px;
  }

  /* timeline */
  .timeline {
    flex: 309;
    display: flex;
    flex-direction: column;
    min-height: 0;
    background: #232323;
    border: 1px solid #3577bd;
    border-bottom: 0;
  }

  .tl-tabs {
    flex: none;
    display: flex;
    align-items: center;
    gap: 14px;
    height: 34px;
    padding-left: 12px;
    color: #b0b0b0;
  }

  .tl-tabs .swatch {
    margin-left: -3px;
    margin-right: 1px;
  }

  .tl-body {
    flex: 1;
    display: flex;
    min-height: 0;
  }

  .layers {
    width: 666px;
    border-right: 1px solid #0c0c0c;
  }

  .tl-controls {
    display: flex;
    height: 43px;
    padding: 0 19px 0 13px;
  }

  .timecode {
    width: 118px;
  }

  .timecode strong {
    display: block;
    height: 26px;
    padding-left: 4px;
    font-size: 19px;
    font-weight: 600;
    line-height: 26px;
    color: #2d8ceb;
  }

  .timecode span {
    display: block;
    font-size: 12px;
    color: #205286;
  }

  .tl-search {
    width: 325px;
    margin-top: 9px;
  }

  .tl-buttons {
    flex: 1;
    display: flex;
    align-items: center;
    gap: 13px;
    padding-left: 19px;
  }

  .tl-buttons .shy-all {
    margin-left: 8px;
  }

  .tl-buttons .graph {
    margin-left: 8px;
  }

  .zoomed .icon {
    width: 20px;
    height: 19px;
  }

  .layer-table thead tr {
    height: 25px;
    border-top: 1px solid #191919;
  }

  .layer-table tbody tr {
    height: 20px;
    background: #2f2f2f;
  }

  .layer-table th {
    padding-top: 2px;
    padding-left: 8px;
  }

  .layer-table th:nth-child(1),
  .layer-table td:nth-child(1) {
    padding-left: 4px;
  }

  .layer-table th:nth-child(5),
  .layer-table td:nth-child(5) {
    padding-left: 6px;
  }

  .l-av {
    width: 84px;
  }

  .l-label {
    width: 40px;
  }

  .l-num {
    width: 41px;
  }

  .l-name {
    width: 162px;
  }

  .l-switch {
    width: 172px;
  }

  .l-parent {
    width: 146px;
  }

  .slots {
    display: flex;
  }

  .slots > span {
    display: flex;
    align-items: center;
    justify-content: center;
    flex: none;
    width: 17px;
    height: 17px;
    margin: 0 1px;
  }

  .slots .cell {
    background: #232323;
  }

  .fx {
    font-style: italic;
    font-size: 15px;
    color: #b0b0b0;
  }

  .label-head {
    padding-left: 10px;
  }

  .label-cell {
    display: flex;
    align-items: center;
    gap: 8px;
  }

  .red {
    width: 16px;
    height: 16px;
    background: #b53a38;
  }

  .num {
    color: #b0b0b0;
  }

  .layer-table td:nth-child(4) {
    padding-left: 4px;
  }

  .layer-name {
    display: flex;
    align-items: center;
    gap: 7px;
  }

  .layer-name b {
    font-weight: 700;
    color: #a0a0a0;
  }

  .turquoise {
    width: 17px;
    height: 17px;
    background: #2af5bd;
    border: 1px solid #101010;
  }

  .parent {
    display: flex;
    align-items: center;
    gap: 7px;
  }

  .layer-table td:nth-child(6) {
    padding-left: 7px;
  }

  .parent-select {
    width: 112px;
  }

  .parent-select select {
    height: 18px;
    border-color: #1c1c1c;
    border-radius: 0;
  }

  .parent-select .icon {
    top: 6px;
  }

  .time {
    flex: 1;
    position: relative;
    display: flex;
    flex-direction: column;
    min-width: 0;
    padding: 8px 0 2px;
    border-right: 1px solid #141414;
  }

  .navigator,
  .workarea {
    flex: none;
    margin: 0 1px;
    border: solid #2d8ceb;
    border-width: 0 8px;
    border-radius: 5px;
  }

  .navigator {
    position: relative;
    height: 11px;
    margin-bottom: 2px;
    background: #666;
    background-clip: padding-box;
  }

  .nav-mark {
    position: absolute;
    top: 0;
    width: 2px;
    height: 11px;
    background: #6a92ba;
  }

  .ruler {
    position: relative;
    height: 23px;
    margin: 0 9px;
  }

  .ruler::after {
    content: '';
    position: absolute;
    inset: auto -9px 0;
    height: 1px;
    background: #0c0c0c;
  }

  .tick {
    position: absolute;
    top: 0;
    width: 30px;
    height: 22px;
    margin-left: -16px;
    font-size: 12px;
    text-align: center;
    color: #9a9a9a;
  }

  .tick:first-child {
    margin-left: -8px;
  }

  .tick::after {
    content: '';
    position: absolute;
    left: 15px;
    bottom: 0;
    width: 1px;
    height: 7px;
    background: #9a9a9a;
  }

  .tick:first-child::after {
    left: 8px;
    height: 10px;
  }

  .workarea {
    height: 19px;
    margin: 0 2px;
    border-width: 0 7px;
    background: #606060;
    background-clip: padding-box;
  }

  .cached {
    height: 4px;
    margin: 1px 10px 1px 9px;
    background: #22b232;
  }

  .track {
    padding: 0 10px 0 9px;
    background: #2f2f2f;
    border-bottom: 1px solid #1c1c1c;
  }

  .track i {
    display: block;
    height: 19px;
    background: #7c393b;
  }

  .empty {
    flex: 1;
    margin: 0 10px 0 9px;
    background: #313131;
  }

  .playhead-rail {
    position: absolute;
    inset: 25px 10px 2px 9px;
    pointer-events: none;
  }

  .playhead {
    position: absolute;
    top: 0;
    bottom: 0;
    width: 14px;
    margin-left: -6px;
    background: linear-gradient(#3a86d4, #3a86d4) center / 1px 100% no-repeat;
  }

  .markers {
    width: 19px;
    padding-top: 46px;
    overflow: hidden;
  }

  .markers .icon:first-child {
    margin: 0 0 10px 4px;
  }

  .tl-footer {
    flex: none;
    display: flex;
    align-items: center;
    height: 21px;
    border-top: 1px solid #0c0c0c;
  }

  .panes {
    display: flex;
    gap: 9px;
    width: 130px;
    padding-left: 8px;
  }

  .render {
    width: 258px;
    color: #9a9a9a;
  }

  .render em {
    margin-left: 10px;
    font-style: normal;
    color: #5ecfa4;
  }

  .modes {
    width: 168px;
    height: 20px;
    background: #1e1e1e;
    border: 1px solid #2c2c2c;
  }

  .scale {
    display: flex;
    align-items: center;
    gap: 15px;
    margin-left: 117px;
  }

  .scale input {
    appearance: none;
    width: 60px;
    height: 12px;
    background: linear-gradient(#444, #444) center / 100% 3px no-repeat;
  }

  .scale input::-webkit-slider-thumb {
    appearance: none;
    box-sizing: border-box;
    width: 13px;
    height: 13px;
    border: 3px solid #9a9a9a;
    border-radius: 50%;
    background: #232323;
  }

  /* right column */
  .right {
    display: flex;
    flex-direction: column;
    gap: 6px;
    width: 390px;
  }

  .preview {
    flex: 536;
  }

  .properties {
    flex: 448;
  }

  h2 {
    display: flex;
    align-items: center;
    gap: 16px;
    height: 36px;
    padding-left: 16px;
    color: #b8b8b8;
  }

  .form {
    width: 243px;
    margin-left: 8px;
  }

  .transport {
    display: flex;
    align-items: center;
    gap: 15px;
    height: 36px;
    padding: 0 0 2px 50px;
    border-bottom: 1px solid #303030;
  }

  .caption {
    margin: 10px 0 5px;
  }

  .caption.first {
    margin: 8px 0 4px;
  }

  .caption.tight {
    margin: 6px 0 5px;
  }

  .line {
    display: flex;
    align-items: center;
    gap: 12px;
  }

  .shortcut {
    width: 209px;
  }

  .include {
    height: 25px;
    margin: 6px 0 5px;
    gap: 3px;
  }

  .include > span {
    width: 116px;
  }

  .toggle {
    width: 27px;
    height: 25px;
    background: #151515;
    border: 1px solid #303030;
    border-radius: 3px;
  }

  .toggle .icon {
    color: #2d8ceb;
  }

  .overlays {
    width: 30px;
    height: 24px;
    border-right: 1px solid #303030;
  }

  .export {
    margin-left: 8px;
  }

  .form > .check {
    height: 18px;
    margin-bottom: 4px;
  }

  .triple {
    display: grid;
    grid-template-columns: 83px 53px 92px;
    gap: 4px 5px;
    margin: 5px 0;
  }

  .combo {
    display: flex;
    height: 24px;
    background: #181818;
    border: 1px solid #2e2e2e;
    border-radius: 3px;
    color: #b8b8b8;
  }

  .combo input {
    flex: 1;
    width: 0;
    padding-left: 7px;
  }

  .combo button {
    width: 23px;
    border-left: 1px solid #2e2e2e;
  }

  .stop {
    margin: 6px 0;
    padding-top: 7px;
    border-top: 1px solid #303030;
  }

  .properties h2 {
    height: 65px;
    padding: 0 13px 29px 16px;
    margin-right: 15px;
    justify-content: space-between;
    border-bottom: 1px solid #161616;
  }

  .closed {
    justify-content: flex-start;
    height: 38px;
    margin: 0 15px 0 1px;
    padding-left: 15px;
    border-bottom: 3px solid #181818;
  }
</style>
